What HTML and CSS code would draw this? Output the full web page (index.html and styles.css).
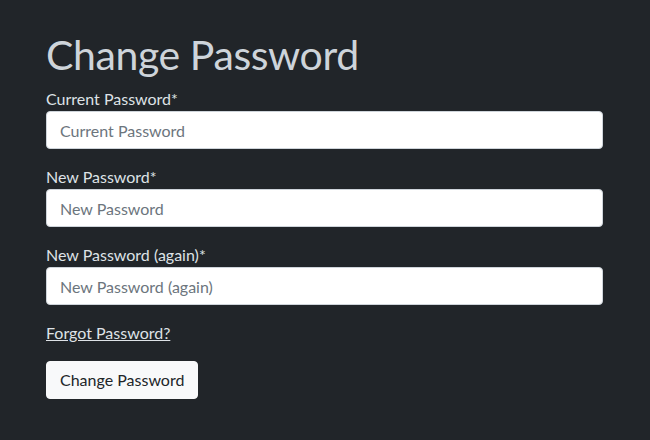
FILE: index.html
```html
<!DOCTYPE html>
<html lang="en">
<head>
<meta charset="utf-8">
<title>Change Password</title>
<link rel="stylesheet" href="styles.css">
</head>
<body>
<main class="page">
  <h1 class="title">Change Password</h1>
  <form class="form">
    <div class="field">
      <label class="label" for="cur">Current Password*</label>
      <input class="input" id="cur" type="password" placeholder="Current Password">
    </div>
    <div class="field">
      <label class="label" for="new1">New Password*</label>
      <input class="input" id="new1" type="password" placeholder="New Password">
    </div>
    <div class="field">
      <label class="label" for="new2">New Password (again)*</label>
      <input class="input" id="new2" type="password" placeholder="New Password (again)">
    </div>
    <p class="forgot"><a class="link" href="#">Forgot Password?</a></p>
    <button class="btn" type="button">Change Password</button>
  </form>
</main>
</body>
</html>
```
FILE: styles.css
```css
html, body {
  margin: 0;
  height: 100%;
  background: #212529;
}
body {
  font-family: Lato, "Open Sans", sans-serif;
  font-size: 16px;
  line-height: 1.5;
  color: #dee2e6;
}
.page {
  padding: 30px 47px 0 46px;
}
.title {
  margin: 0 0 8px;
  font-size: 41px;
  font-weight: 400;
  line-height: 1.2;
  letter-spacing: -0.4px;
  color: #ced4da;
}
.form {
  margin: 0;
}
.field {
  margin-bottom: 16px;
}
.label {
  display: block;
  color: #dee2e6;
}
.input {
  display: block;
  box-sizing: border-box;
  width: 100%;
  height: 38px;
  padding: 6px 13px;
  font-family: inherit;
  font-size: 16px;
  line-height: 1.5;
  color: #212529;
  background: #fff;
  border: 1px solid #ced4da;
  border-radius: 4px;
  outline: none;
}
.input::placeholder {
  color: #6c757d;
  opacity: 1;
}
.forgot {
  margin: 0 0 16px;
}
.link {
  color: #dee2e6;
  text-decoration: underline;
}
.btn {
  display: inline-block;
  box-sizing: border-box;
  height: 38px;
  padding: 6px 13px;
  font-family: inherit;
  font-size: 16px;
  line-height: 1.5;
  color: #212529;
  background: #f8f9fa;
  border: 1px solid #f8f9fa;
  border-radius: 4px;
}
```
